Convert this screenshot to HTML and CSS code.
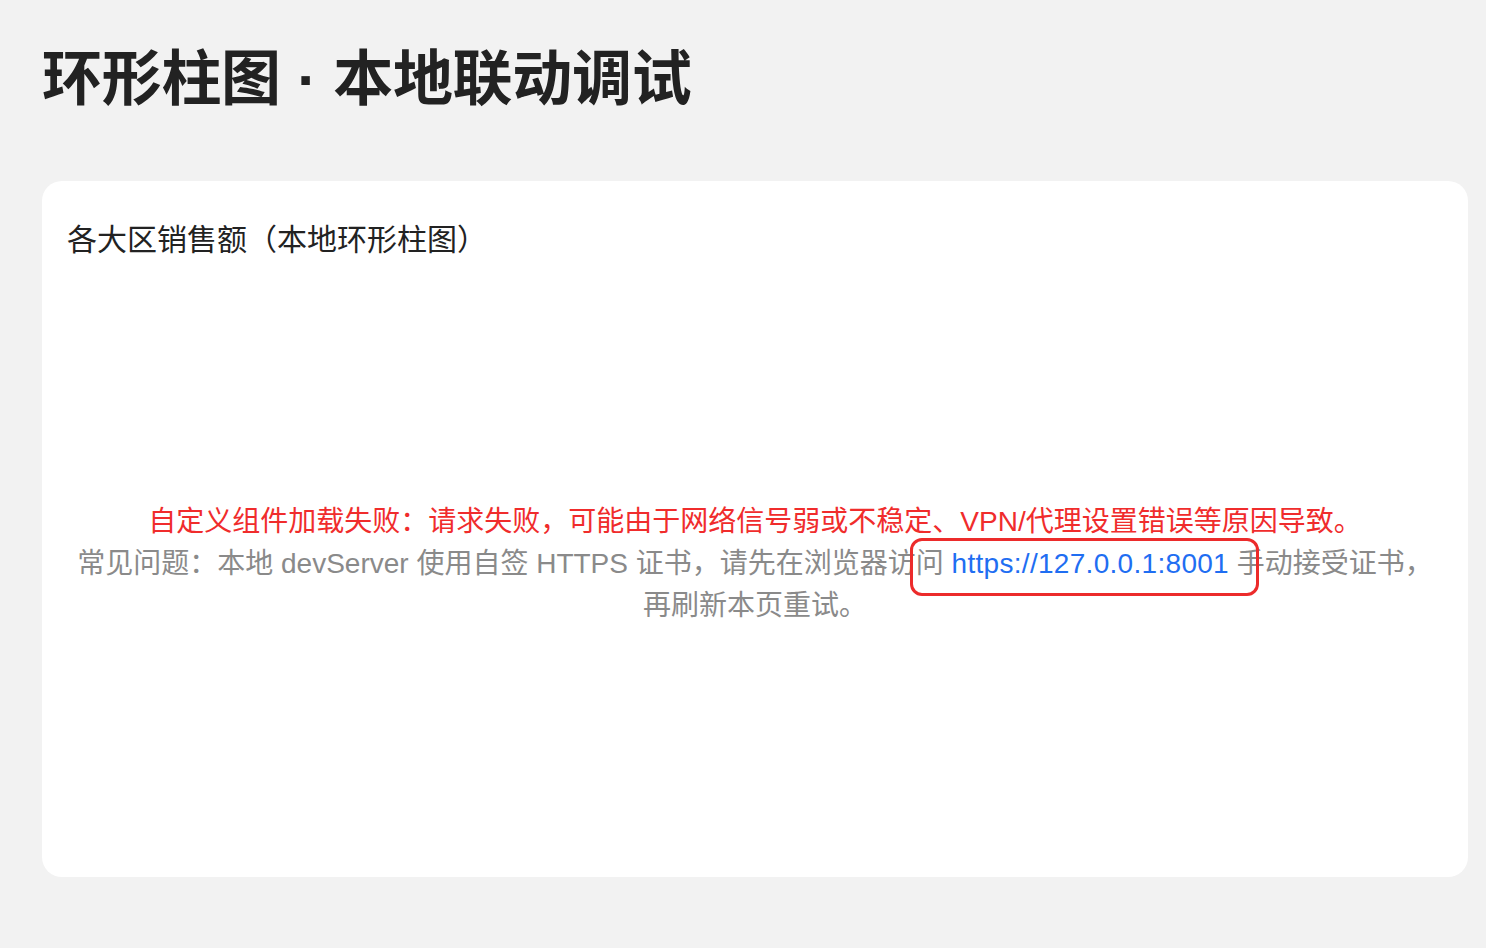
FILE: index.html
```html
<!DOCTYPE html>
<html lang="zh-CN">
<head>
<meta charset="utf-8">
<title>环形柱图 · 本地联动调试</title>
<link rel="stylesheet" href="styles.css">
</head>
<body>
<main class="page">
  <h1 class="page-title">环形柱图 · 本地联动调试</h1>
  <section class="card">
    <h2 class="card-title">各大区销售额（本地环形柱图）</h2>
    <div class="chart-area">
      <div class="error">
        <p class="error-main">自定义组件加载失败：请求失败，可能由于网络信号弱或不稳定、VPN/代理设置错误等原因导致。</p>
        <p class="error-hint">常见问题：本地 devServer 使用自签 HTTPS 证书，请先在浏览器访问 <span class="link-wrap"><a class="link" href="https://127.0.0.1:8001">https://127.0.0.1:8001</a></span> 手动接受证书，再刷新本页重试。</p>
      </div>
    </div>
  </section>
</main>
</body>
</html>
```
FILE: styles.css
```css
html, body {
  margin: 0;
  padding: 0;
  background: #f2f2f2;
}
body {
  font-family: "Liberation Sans", "Noto Sans CJK SC", sans-serif;
  color: #222;
}
.page {
  padding: 38px 18px 0 42px;
}
.page-title {
  margin: 0;
  font-size: 60px;
  line-height: 84px;
  font-weight: 700;
  color: #222;
  letter-spacing: -0.3px;
}
.card {
  margin-top: 59px;
  height: 696px;
  box-sizing: border-box;
  background: #fff;
  border-radius: 20px;
  padding: 38px 25px 10px 25px;
  display: flex;
  flex-direction: column;
}
.card-title {
  margin: 0;
  font-size: 30px;
  line-height: 42px;
  font-weight: 400;
  color: #222;
}
.chart-area {
  flex: 1;
  display: flex;
  align-items: center;
  justify-content: center;
}
.error {
  text-align: center;
  font-size: 28px;
  line-height: 42px;
  padding: 0 8px;
}
.error p {
  margin: 0;
}
.error-main {
  color: #f02c2c;
}
.error-hint {
  color: #8a8a8a;
}
.link-wrap {
  position: relative;
}
.link {
  color: #1f6ef2;
  text-decoration: none;
  letter-spacing: 0.3px;
}
.link-wrap::after {
  content: "";
  position: absolute;
  left: -42px;
  right: -30px;
  top: -10px;
  bottom: -17px;
  border: 3px solid #ec2b2b;
  border-radius: 12px;
  pointer-events: none;
}
```
